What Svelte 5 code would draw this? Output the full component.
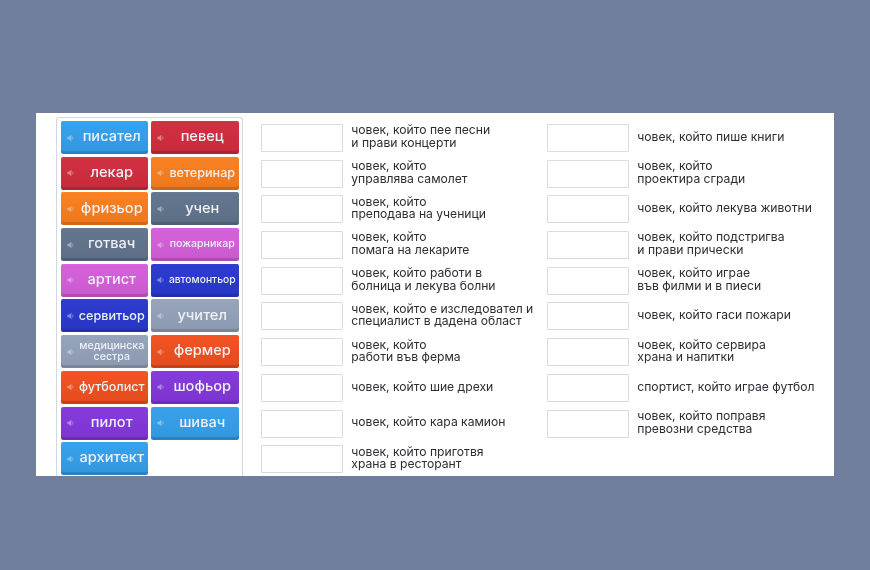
<script>
  const cards = [
    ['писател', 'blue', 'f15'], ['певец', 'red', 'f15'],
    ['лекар', 'red', 'f15'], ['ветеринар', 'orange', 'f13'],
    ['фризьор', 'orange', 'f15'], ['учен', 'slate', 'f15'],
    ['готвач', 'slate', 'f15'], ['пожарникар', 'pink', 'f11'],
    ['артист', 'pink', 'f15'], ['автомонтьор', 'navy', 'f10'],
    ['сервитьор', 'navy', 'f13'], ['учител', 'grey', 'f15'],
    ['медицинска сестра', 'grey', 'f11'], ['фермер', 'tomato', 'f15'],
    ['футболист', 'tomato', 'f13'], ['шофьор', 'purple', 'f15'],
    ['пилот', 'purple', 'f15'], ['шивач', 'blue', 'f15'],
    ['архитект', 'blue', 'f15']
  ];
  const col1 = [
    ['човек, който пее песни', 'и прави концерти'],
    ['човек, който', 'управлява самолет'],
    ['човек, който', 'преподава на ученици'],
    ['човек, който', 'помага на лекарите'],
    ['човек, който работи в', 'болница и лекува болни'],
    ['човек, който е изследовател и', 'специалист в дадена област'],
    ['човек, който', 'работи във ферма'],
    ['човек, който шие дрехи'],
    ['човек, който кара камион'],
    ['човек, който приготвя', 'храна в ресторант']
  ];
  const col2 = [
    ['човек, който пише книги'],
    ['човек, който', 'проектира сгради'],
    ['човек, който лекува животни'],
    ['човек, който подстригва', 'и прави прически'],
    ['човек, който играе', 'във филми и в пиеси'],
    ['човек, който гаси пожари'],
    ['човек, който сервира', 'храна и напитки'],
    ['спортист, който играе футбол'],
    ['човек, който поправя', 'превозни средства']
  ];
</script>

{#snippet rows(list)}
  <div class="col">
    {#each list as lines}
      <div class="row">
        <div class="box"></div>
        <div class="desc">
          {#each lines as l}<div>{l}</div>{/each}
        </div>
      </div>
    {/each}
  </div>
{/snippet}

<div class="page">
  <div class="panel">
    <div class="bank">
      {#each cards as c}
        <div class="card {c[1]}">
          <svg class="spk" viewBox="0 0 10 10" width="8" height="8" aria-hidden="true">
            <path d="M0.5 3.5H2.5L5.5 1V9L2.5 6.5H0.5Z" fill="currentColor" />
            <path d="M7 3.2Q8.2 5 7 6.8" fill="none" stroke="currentColor" stroke-width="1" />
          </svg>
          <span class={c[2]}>{c[0]}</span>
        </div>
      {/each}
    </div>
    <div class="lists">
      {@render rows(col1)}
      {@render rows(col2)}
    </div>
  </div>
</div>

<style>
  :global(body) { margin: 0; }
  .page {
    width: 870px;
    height: 570px;
    box-sizing: border-box;
    background: #6f7f9d;
    padding: 113px 36px 0;
    font-family: Inter, "Noto Sans", sans-serif;
    overflow: hidden;
  }
  .panel {
    width: 798px;
    height: 363px;
    background: #fff;
    display: flex;
    overflow: hidden;
    filter: blur(0.45px);
  }
  .bank {
    margin: 4px 0 0 20px;
    width: 187px;
    flex: none;
    height: 359px;
    box-sizing: border-box;
    border: 1px solid #d5d7e0;
    border-bottom: none;
    border-radius: 3px 3px 0 0;
    padding: 3px 0 0 3.5px;
    display: grid;
    grid-template-columns: 87.5px 87.5px;
    grid-auto-rows: 33px;
    column-gap: 3px;
    row-gap: 2.7px;
  }
  .card {
    position: relative;
    border-radius: 2px;
    color: #eef0f6;
    font-weight: 500;
    display: flex;
    align-items: center;
    justify-content: center;
    padding: 0 2px 1px 17px;
    box-sizing: border-box;
    text-align: center;
    line-height: 11.5px;
    background-image: linear-gradient(rgba(255, 255, 255, 0.02), rgba(0, 0, 0, 0.06));
    box-shadow: inset 0 -3px 1px rgba(0, 0, 0, 0.14), inset 0 0 1px rgba(255, 255, 255, 0.2);
  }
  .spk {
    position: absolute;
    left: 6px;
    top: 12.5px;
    opacity: 0.45;
  }
  .f15 { font-size: 14.6px; }
  .f13 { font-size: 12.6px; }
  .f11 { font-size: 10.6px; }
  .f10 { font-size: 10.3px; }
  .blue { background-color: #35a0ec; }
  .red { background-color: #d22d3f; }
  .orange { background-color: #fb7f1e; }
  .slate { background-color: #62748e; }
  .pink { background-color: #d65fdb; }
  .navy { background-color: #2a39cf; }
  .grey { background-color: #94a3bb; }
  .tomato { background-color: #f2501f; }
  .purple { background-color: #8437dc; }
  .lists {
    display: flex;
    margin: 11px 0 0 18px;
  }
  .col {
    width: 286px;
    display: flex;
    flex-direction: column;
  }
  .row {
    display: flex;
    align-items: center;
    height: 28px;
    margin-bottom: 7.7px;
    gap: 8.3px;
  }
  .box {
    width: 80px;
    height: 26px;
    flex: none;
    border: 1px solid #d9dbe0;
    border-radius: 1px;
  }
  .desc {
    font-size: 12.15px;
    line-height: 12.6px;
    color: #2b2d33;
    white-space: nowrap;
    padding-bottom: 2px;
  }
</style>
